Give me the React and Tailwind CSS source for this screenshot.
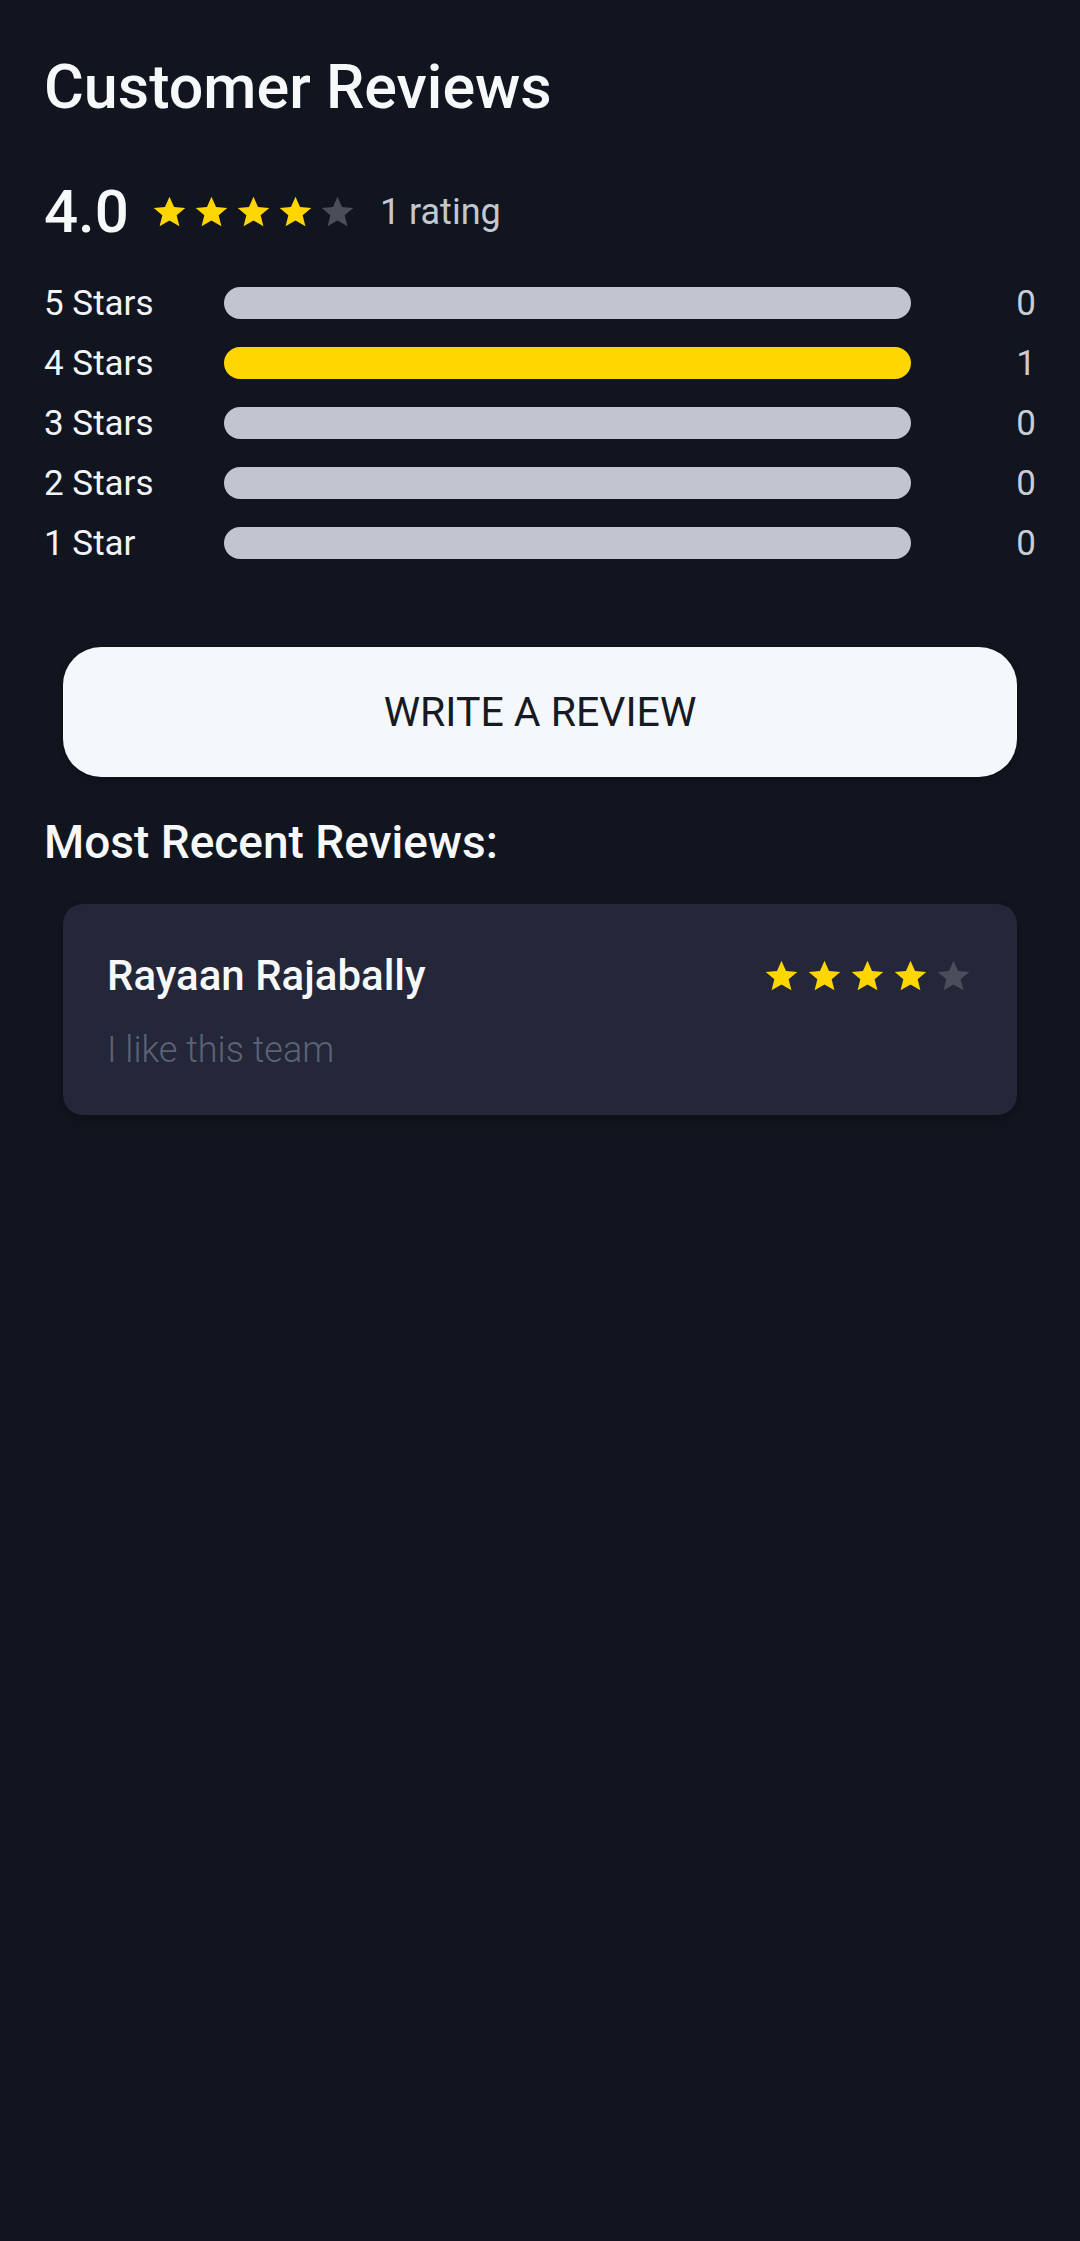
import React from "react";

const FONT = { fontFamily: "Roboto, 'Liberation Sans', sans-serif" };

function Star({ filled, size = 34 }) {
  return (
    <svg width={size} height={size} viewBox="0 0 24 24" className="shrink-0">
      <polygon
        points="12,1.2 15.1,8.3 22.8,8.9 16.9,13.9 18.8,21.5 12,17.4 5.2,21.5 7.1,13.9 1.2,8.9 8.9,8.3"
        fill={filled ? "#FFD600" : "#4a4e5b"}
      />
    </svg>
  );
}

function Stars({ value, size, gap }) {
  return (
    <div className={`flex items-center ${gap}`}>
      {[1, 2, 3, 4, 5].map((i) => (
        <Star key={i} filled={i <= value} size={size} />
      ))}
    </div>
  );
}

const rows = [
  { label: "5 Stars", count: 0 },
  { label: "4 Stars", count: 1 },
  { label: "3 Stars", count: 0 },
  { label: "2 Stars", count: 0 },
  { label: "1 Star", count: 0 },
];

export default function App() {
  return (
    <div className="min-h-[2241px] w-full bg-[#11151f] px-[44px] pt-[56px]" style={FONT}>
      <h1 className="text-[61px] leading-[62px] font-medium text-[#f7f8fa]">Customer Reviews</h1>

      <div className="mt-[63px] flex items-center">
        <span className="text-[60px] leading-[62px] font-medium text-[#f7f8fa]">4.0</span>
        <div className="ml-[23px]">
          <Stars value={4} size={35} gap="gap-[7px]" />
        </div>
        <span className="ml-[25px] text-[36px] leading-[36px] text-[#c3c7d0]">1 rating</span>
      </div>

      <div className="mt-[30px] flex flex-col">
        {rows.map((r) => (
          <div key={r.label} className="flex h-[60px] items-center">
            <span className="w-[180px] text-[35px] leading-[35px] text-[#f2f4f7]">{r.label}</span>
            <div
              className={`h-[32px] flex-1 rounded-full ${r.count > 0 ? "bg-[#FFD600]" : "bg-[#c1c5cf]"}`}
            />
            <span className="w-[125px] text-right text-[35px] leading-[35px] text-[#c8ccd4]">{r.count}</span>
          </div>
        ))}
      </div>

      <button className="mx-[19px] mt-[74px] flex h-[130px] w-[954px] items-center justify-center rounded-[38px] bg-[#f5f8fb] shadow-[0_2px_6px_rgba(0,0,0,0.35)]">
        <span className="text-[41px] leading-[42px] text-[#171a22]">WRITE A REVIEW</span>
      </button>

      <h2 className="mt-[42px] text-[46px] leading-[46px] font-medium text-[#f7f8fa]">Most Recent Reviews:</h2>

      <div className="mx-[19px] mt-[39px] rounded-[20px] bg-[#242739] pl-[44px] pr-[46px] pt-[51px] pb-[47px] shadow-[0_4px_10px_rgba(0,0,0,0.3)]">
        <div className="flex items-center justify-between">
          <span className="text-[42px] leading-[42px] font-medium text-[#f7f8fa]">Rayaan Rajabally</span>
          <Stars value={4} size={35} gap="gap-[8px]" />
        </div>
        <p className="mt-[35px] text-[36px] leading-[36px] font-light text-[#5d6274]">I like this team</p>
      </div>
    </div>
  );
}
